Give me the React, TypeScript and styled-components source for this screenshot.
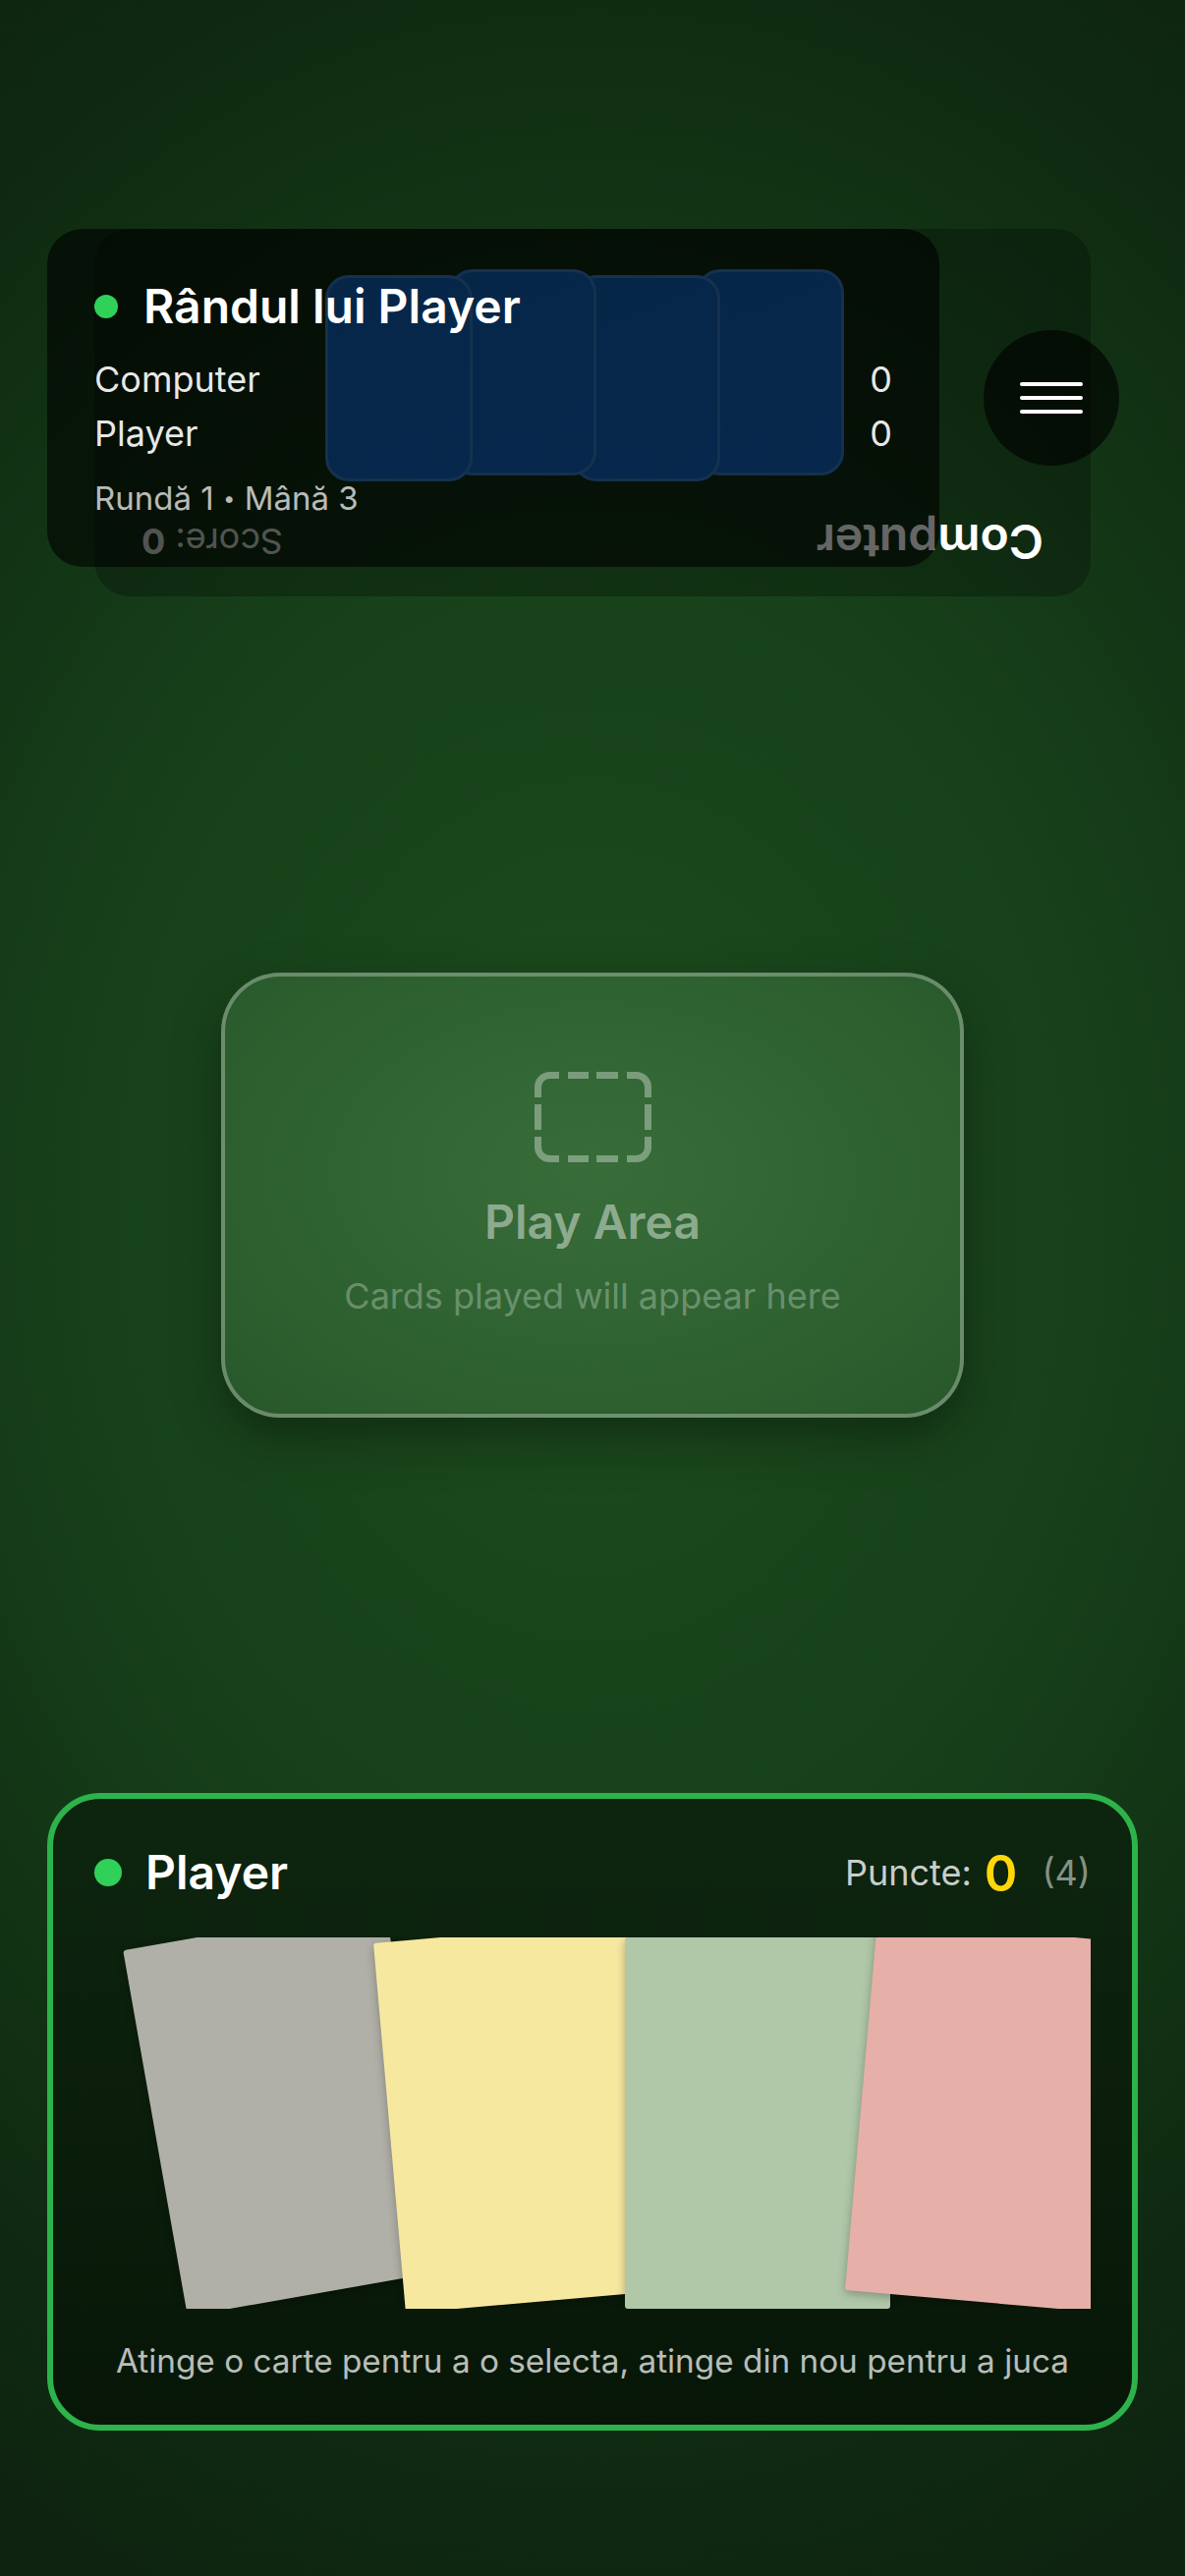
import React from "react";
import styled, { createGlobalStyle } from "styled-components";

const GlobalStyle = createGlobalStyle`
  * { box-sizing: border-box; }
  html, body { margin: 0; padding: 0; }
  body {
    background: #0e2610;
    font-family: Inter, "Noto Sans", "Liberation Sans", sans-serif;
    -webkit-font-smoothing: antialiased;
  }
`;

const Screen = styled.div`
  min-height: 2622px;
  display: flex;
  flex-direction: column;
  overflow: hidden;
  background: radial-gradient(
    ellipse 95% 58% at 50% 47%,
    #1d4c1d 0%,
    #17411a 45%,
    #0f2a11 85%,
    #0e2410 100%
  );
`;

/* ---------- top: opponent + scoreboard ---------- */

const TopArea = styled.div`
  position: relative;
  margin-top: 233px;
  padding: 0 96px;
`;

const OpponentPanel = styled.section`
  height: 374px;
  transform: rotate(180deg);
  background: rgba(0, 0, 0, 0.25);
  border-radius: 36px;
  padding: 27px 48px 39px;
  display: flex;
  flex-direction: column;
`;

const OpponentHeader = styled.div`
  height: 58px;
  display: flex;
  align-items: center;
  justify-content: space-between;
`;

const OpponentName = styled.span`
  font-size: 48px;
  line-height: 58px;
  font-weight: 600;
  color: #ffffff;
`;

const OpponentScore = styled.span`
  font-size: 36px;
  line-height: 43px;
  color: rgba(255, 255, 255, 0.8);
  b {
    font-weight: 700;
  }
`;

const BackRow = styled.div`
  margin-top: 32px;
  height: 217px;
  display: flex;
  justify-content: center;
  padding-left: 16px;
`;

const CardBack = styled.div<{ $index: number }>`
  flex-shrink: 0;
  width: 150px;
  height: 210px;
  margin-left: ${(p) => (p.$index === 0 ? 0 : -24)}px;
  margin-top: ${(p) => (p.$index % 2 === 0 ? 6 : 0)}px;
  border-radius: 24px;
  background: linear-gradient(160deg, #1264bd 0%, #1060b4 100%);
  border: 3px solid rgba(255, 255, 255, 0.16);
`;

const Scoreboard = styled.div`
  position: absolute;
  left: 48px;
  top: 0;
  width: 908px;
  height: 344px;
  padding: 50px 48px 48px;
  border-radius: 36px;
  background: rgba(0, 0, 0, 0.6);
  display: flex;
  flex-direction: column;
  color: #ffffff;
`;

const TurnTitle = styled.div`
  display: flex;
  align-items: center;
  gap: 26px;
  font-size: 48px;
  line-height: 58px;
  font-weight: 600;
`;

const Dot = styled.span<{ $size: number }>`
  flex-shrink: 0;
  width: ${(p) => p.$size}px;
  height: ${(p) => p.$size}px;
  border-radius: 50%;
  background: #30d158;
`;

const ScoreList = styled.div`
  margin-top: 24px;
  display: flex;
  flex-direction: column;
  gap: 12px;
`;

const ScoreRow = styled.div`
  display: flex;
  justify-content: space-between;
  font-size: 36px;
  line-height: 43px;
  color: rgba(255, 255, 255, 0.92);
`;

const RoundInfo = styled.div`
  margin-top: 24px;
  font-size: 33px;
  line-height: 40px;
  color: rgba(255, 255, 255, 0.72);
`;

const Bullet = styled.span`
  font-size: 22px;
  vertical-align: 4px;
`;

const MenuButton = styled.button`
  position: absolute;
  left: 1001px;
  top: 103px;
  width: 138px;
  height: 138px;
  border: none;
  border-radius: 50%;
  background: rgba(0, 0, 0, 0.62);
  padding: 0;
  display: flex;
  flex-direction: column;
  align-items: center;
  justify-content: center;
  gap: 9.5px;
`;

const MenuLine = styled.span`
  width: 64px;
  height: 4.5px;
  border-radius: 3px;
  background: #ffffff;
`;

/* ---------- middle: play area ---------- */

const Table = styled.main`
  flex: 1;
  display: flex;
  align-items: center;
  justify-content: center;
`;

const PlayArea = styled.div`
  width: 756px;
  height: 453px;
  border-radius: 60px;
  border: 4px solid rgba(255, 255, 255, 0.3);
  background: radial-gradient(ellipse at 50% 45%, #386d3a 0%, #2f6231 55%, #28582a 100%);
  box-shadow: 0 20px 50px rgba(0, 0, 0, 0.35);
  display: flex;
  flex-direction: column;
  align-items: center;
  justify-content: center;
`;

const PlayTitle = styled.div`
  margin-top: 32px;
  font-size: 48px;
  line-height: 58px;
  font-weight: 600;
  color: rgba(255, 255, 255, 0.45);
`;

const PlaySub = styled.div`
  margin-top: 25px;
  font-size: 36px;
  line-height: 43px;
  color: rgba(255, 255, 255, 0.3);
`;

const DashedIcon = () => (
  <svg width="119" height="92" viewBox="0 0 119 92" fill="none">
    <g stroke="rgba(255,255,255,0.35)" strokeWidth="7" strokeLinecap="butt">
      <path d="M3.5 26 V15.5 A12 12 0 0 1 15.5 3.5 H25" />
      <path d="M94 3.5 H103.5 A12 12 0 0 1 115.5 15.5 V26" />
      <path d="M115.5 66 V76.5 A12 12 0 0 1 103.5 88.5 H94" />
      <path d="M25 88.5 H15.5 A12 12 0 0 1 3.5 76.5 V66" />
      <path d="M34 3.5 H55 M63 3.5 H85" />
      <path d="M34 88.5 H55 M63 88.5 H85" />
      <path d="M3.5 33 V59" />
      <path d="M115.5 33 V59" />
    </g>
  </svg>
);

/* ---------- bottom: player panel ---------- */

const PlayerPanel = styled.section`
  margin: 0 48px 148px;
  border: 6px solid #2db34c;
  border-radius: 54px;
  padding: 42px;
  background: linear-gradient(180deg, #0d250f 0%, #0a1d0b 60%, #071607 100%);
`;

const PanelHeader = styled.div`
  height: 66px;
  display: flex;
  align-items: center;
  justify-content: space-between;
`;

const PlayerName = styled.div`
  display: flex;
  align-items: center;
  gap: 24px;
  font-size: 48px;
  line-height: 58px;
  font-weight: 600;
  color: #ffffff;
`;

const Points = styled.div`
  display: flex;
  align-items: center;
  font-size: 36px;
  color: rgba(255, 255, 255, 0.78);
`;

const PointsValue = styled.span`
  margin-left: 13px;
  font-size: 51px;
  font-weight: 600;
  color: #ffd60a;
`;

const CardCount = styled.span`
  margin-left: 25px;
  color: rgba(255, 255, 255, 0.5);
`;

const Hand = styled.div`
  margin-top: 33px;
  height: 378px;
  overflow: hidden;
  display: flex;
  padding-left: 60px;
`;

const HandCard = styled.div<{ $index: number; $color: string; $center: number }>`
  flex-shrink: 0;
  width: 270px;
  height: 378px;
  margin-left: ${(p) => (p.$index === 0 ? 0 : -30)}px;
  border-radius: 3px;
  background: ${(p) => p.$color};
  box-shadow: 0 3px 10px rgba(0, 0, 0, 0.28);
  transform: translateY(${(p) => -Math.abs(p.$index - p.$center) * 6.5}px)
    rotate(${(p) => (p.$index - p.$center) * 5}deg);
`;

const Hint = styled.div`
  margin-top: 30px;
  text-align: center;
  font-size: 33.3px;
  line-height: 46px;
  color: rgba(255, 255, 255, 0.72);
`;

const handColors = ["#b0b0a8", "#f7e8a0", "#b0c8a8", "#e6b0a8"];

export default function App() {
  const center = Math.floor(handColors.length / 2);
  return (
    <>
      <GlobalStyle />
      <Screen>
        <TopArea>
          <OpponentPanel>
            <OpponentHeader>
              <OpponentName>Computer</OpponentName>
              <OpponentScore>
                Score: <b>0</b>
              </OpponentScore>
            </OpponentHeader>
            <BackRow>
              {[0, 1, 2, 3].map((i) => (
                <CardBack key={i} $index={i} />
              ))}
            </BackRow>
          </OpponentPanel>

          <Scoreboard>
            <TurnTitle>
              <Dot $size={24} />
              Rândul lui Player
            </TurnTitle>
            <ScoreList>
              <ScoreRow>
                <span>Computer</span>
                <span>0</span>
              </ScoreRow>
              <ScoreRow>
                <span>Player</span>
                <span>0</span>
              </ScoreRow>
            </ScoreList>
            <RoundInfo>
              Rundă 1 <Bullet>•</Bullet> Mână 3
            </RoundInfo>
          </Scoreboard>

          <MenuButton aria-label="Menu">
            <MenuLine />
            <MenuLine />
            <MenuLine />
          </MenuButton>
        </TopArea>

        <Table>
          <PlayArea>
            <DashedIcon />
            <PlayTitle>Play Area</PlayTitle>
            <PlaySub>Cards played will appear here</PlaySub>
          </PlayArea>
        </Table>

        <PlayerPanel>
          <PanelHeader>
            <PlayerName>
              <Dot $size={28} />
              Player
            </PlayerName>
            <Points>
              Puncte:
              <PointsValue>0</PointsValue>
              <CardCount>(4)</CardCount>
            </Points>
          </PanelHeader>
          <Hand>
            {handColors.map((c, i) => (
              <HandCard key={i} $index={i} $color={c} $center={center} />
            ))}
          </Hand>
          <Hint>Atinge o carte pentru a o selecta, atinge din nou pentru a juca</Hint>
        </PlayerPanel>
      </Screen>
    </>
  );
}
